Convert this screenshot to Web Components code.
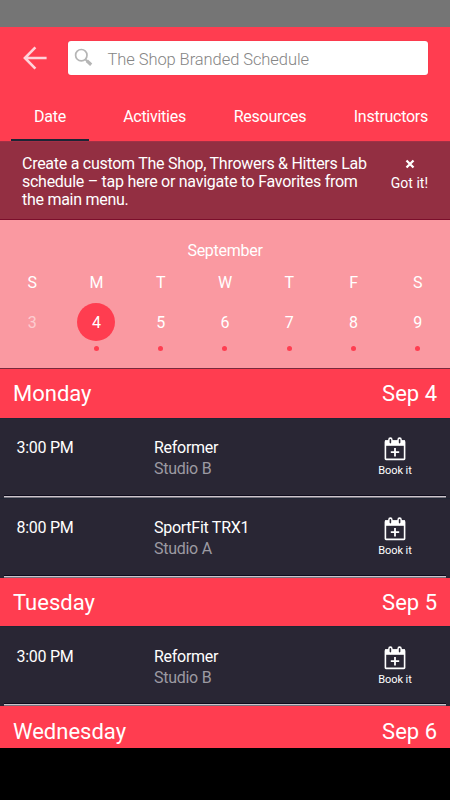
<!DOCTYPE html>
<html lang="en">
<head>
<meta charset="utf-8">
<meta name="viewport" content="width=device-width, initial-scale=1">
<title>Schedule</title>
<style>
    body{
        margin: 0;
        background-color: #000;
        font-family: Roboto, sans-serif;
        font-size: 16px;
        letter-spacing: -.27px;
        color: #fff;
    }
</style>
</head>
<body>
<schedule-app></schedule-app>
<script>
class BaseElement extends HTMLElement{
    constructor(){
        super();
        this.attachShadow({ mode: 'open' });
    }
    connectedCallback(){
        this.shadowRoot.innerHTML = `<style>${this.styles()}</style>${this.template()}`;
    }
}

window.customElements.define('search-bar', class extends BaseElement{
    styles(){
        return `
            :host{
                display: flex;
                align-items: center;
                height: 34px;
                padding: 14px 22px 16px 23px;
            }
            .back{
                width: 24px;
                height: 24px;
                margin-right: 21px;
            }
            .field{
                flex: 1;
                display: flex;
                align-items: center;
                height: 34px;
                box-sizing: border-box;
                padding-left: 6px;
                border-radius: 3px;
                background-color: #fff;
                box-shadow: 0 0 1px rgba(190, 20, 50, .5);
                color: #858585;
                font-size: 16.5px;
                font-weight: 300;
                letter-spacing: -.07px;
            }
            .field svg{
                width: 19px;
                height: 19px;
                margin: -1px 14.5px 0 0;
            }
            .field span{
                padding-top: 2px;
            }
        `;
    }
    template(){
        return `
            <svg class="back" viewBox="0 0 24 24" fill="none" stroke="#ffd3da" stroke-width="2.6">
                <path d="M12.4 1.4 1.9 12l10.5 10.6M1.9 12H23.6"/>
            </svg>
            <div class="field">
                <svg viewBox="0 0 19 19" fill="none" stroke="#b5b5b5">
                    <circle cx="7.3" cy="7.2" r="5.7" stroke-width="1.7"/>
                    <path d="m11.5 11.5 2 2" stroke-width="1.8"/>
                    <path d="m12.8 12.8 4.4 4" stroke-width="3.2"/>
                </svg>
                <span><slot></slot></span>
            </div>
        `;
    }
});

window.customElements.define('tab-item', class extends BaseElement{
    styles(){
        return `
            :host{
                display: flex;
                align-items: center;
                justify-content: center;
                height: 50px;
                box-sizing: border-box;
                padding-top: 2px;
                border-bottom: 2px solid transparent;
            }
            :host([active]){
                border-color: #1c2535;
            }
        `;
    }
    template(){
        return `<slot></slot>`;
    }
});

window.customElements.define('notice-bar', class extends BaseElement{
    styles(){
        return `
            :host{
                display: flex;
                justify-content: space-between;
                height: 79px;
                box-sizing: border-box;
                padding: 13px 22px 0;
                background-color: #932f42;
                border-top: 1px solid #a23046;
                border-bottom: 1px solid #7b0e2b;
            }
            p{
                margin: 0;
                width: 350px;
                line-height: 18px;
            }
            .close{
                display: flex;
                flex-direction: column;
                align-items: center;
                font-size: 14px;
                letter-spacing: 0;
                line-height: 18px;
            }
            .close svg{
                width: 10px;
                height: 10px;
                margin: 4px 0 5px 1px;
            }
        `;
    }
    template(){
        return `
            <p><slot></slot></p>
            <div class="close">
                <svg viewBox="0 0 10 10" stroke="#fff" stroke-width="2.3"><path d="m1.5 1.5 7 7m0-7-7 7"/></svg>
                <slot name="action"></slot>
            </div>
        `;
    }
});

window.customElements.define('calendar-day', class extends BaseElement{
    styles(){
        return `
            :host{
                display: flex;
                flex-direction: column;
                align-items: center;
                letter-spacing: 0;
            }
            .name{
                height: 20px;
                line-height: 21px;
            }
            .number{
                width: 38px;
                height: 38px;
                margin-top: 11px;
                border-radius: 50%;
                text-align: center;
                line-height: 39px;
            }
            .dot{
                width: 5px;
                height: 5px;
                margin-top: 5px;
                border-radius: 50%;
                background-color: #ff3d50;
            }
            :host([selected]) .number{
                background-color: #ff3d50;
            }
            :host([past]) .number{
                opacity: .5;
            }
            :host([past]) .dot{
                display: none;
            }
        `;
    }
    template(){
        return `
            <div class="name">${this.getAttribute('name')}</div>
            <div class="number"><slot></slot></div>
            <div class="dot"></div>
        `;
    }
});

window.customElements.define('week-calendar', class extends BaseElement{
    styles(){
        return `
            :host{
                display: block;
                height: 149px;
                box-sizing: border-box;
                padding-top: 20px;
                background-color: #fa99a1;
                border-bottom: 1px solid #79293c;
            }
            .month{
                height: 32px;
                line-height: 21px;
                text-align: center;
            }
            .week{
                display: grid;
                grid-template-columns: repeat(7, 1fr);
            }
        `;
    }
    template(){
        return `
            <div class="month">${this.getAttribute('month')}</div>
            <div class="week"><slot></slot></div>
        `;
    }
});

window.customElements.define('day-header', class extends BaseElement{
    styles(){
        return `
            :host{
                display: flex;
                align-items: center;
                justify-content: space-between;
                flex: none;
                height: 48.6px;
                box-sizing: border-box;
                padding: 1.2px 13px 0;
                background-color: #ff3d50;
                font-size: 22px;
                letter-spacing: 0;
            }
        `;
    }
    template(){
        return `<slot></slot><slot name="date"></slot>`;
    }
});

window.customElements.define('class-row', class extends BaseElement{
    styles(){
        return `
            :host{
                display: flex;
                flex-direction: column;
                flex: none;
                height: 80px;
                background-color: #292634;
            }
            .content{
                flex: 1;
                display: grid;
                grid-template-columns: 137.5px 1fr 60px;
                box-sizing: border-box;
                padding: 18.4px 16.5px 0;
                border-top: 1px solid #1f2534;
                line-height: 21px;
            }
            .room{
                color: #9c9aa2;
            }
            .book{
                display: flex;
                flex-direction: column;
                align-items: center;
                width: 43px;
                font-size: 11px;
                letter-spacing: -.1px;
                line-height: 14px;
            }
            .book svg{
                width: 22px;
                height: 24px;
                margin: 0 0 3px;
            }
            .line{
                height: 2px;
                margin: 0 4px;
                box-sizing: border-box;
                background-color: #cbc5cc;
                border-bottom: 1px solid #77737e;
                box-shadow: 0 -1px #0e0b1c;
            }
        `;
    }
    template(){
        return `
            <div class="content">
                <div>${this.getAttribute('time')}</div>
                <div>
                    <div><slot></slot></div>
                    <div class="room">${this.getAttribute('room')}</div>
                </div>
                <div class="book">
                    <svg viewBox="0 0 22 24" fill="none" stroke="#fff">
                        <path d="M1 3.2h20v5.6H1z" fill="#fff" stroke="none"/>
                        <rect x="1.4" y="4.4" width="19.2" height="18" rx=".6" stroke-width="1.6"/>
                        <path d="M6.4 6V2.4M15.6 6V2.4" stroke-width="4.4" stroke-linecap="round"/>
                        <path d="M6.4 5.6V2.8M15.6 5.6V2.8" stroke="#292634" stroke-width="1.6" stroke-linecap="round"/>
                        <path d="M11 11v8.4M6.8 15.2h8.4" stroke-width="1.8"/>
                    </svg>
                    <span>Book it</span>
                </div>
            </div>
            <div class="line"></div>
        `;
    }
});

window.customElements.define('schedule-app', class extends BaseElement{
    styles(){
        return `
            :host{
                display: flex;
                flex-direction: column;
                height: 800px;
                overflow: hidden;
            }
            .status{
                height: 27px;
                background-color: #757575;
            }
            header{
                height: 114px;
                background-color: #ff3d50;
            }
            nav{
                display: grid;
                grid-template-columns: 78px 131px 100px 1fr;
                padding: 0 22px 0 11px;
            }
            nav tab-item:last-child{
                justify-content: flex-end;
            }
            main{
                display: flex;
                flex-direction: column;
                height: 379px;
                overflow: hidden;
            }
        `;
    }
    template(){
        return `
            <div class="status"></div>
            <header>
                <search-bar>The Shop Branded Schedule</search-bar>
                <nav>
                    <tab-item active>Date</tab-item>
                    <tab-item>Activities</tab-item>
                    <tab-item>Resources</tab-item>
                    <tab-item>Instructors</tab-item>
                </nav>
            </header>
            <notice-bar>
                Create a custom The Shop, Throwers &amp; Hitters Lab schedule – tap here or navigate to Favorites from the main menu.
                <span slot="action">Got it!</span>
            </notice-bar>
            <week-calendar month="September">
                <calendar-day name="S" past>3</calendar-day>
                <calendar-day name="M" selected>4</calendar-day>
                <calendar-day name="T">5</calendar-day>
                <calendar-day name="W">6</calendar-day>
                <calendar-day name="T">7</calendar-day>
                <calendar-day name="F">8</calendar-day>
                <calendar-day name="S">9</calendar-day>
            </week-calendar>
            <main>
                <day-header>Monday<span slot="date">Sep 4</span></day-header>
                <class-row time="3:00 PM" room="Studio B">Reformer</class-row>
                <class-row time="8:00 PM" room="Studio A">SportFit TRX1</class-row>
                <day-header>Tuesday<span slot="date">Sep 5</span></day-header>
                <class-row time="3:00 PM" room="Studio B">Reformer</class-row>
                <day-header>Wednesday<span slot="date">Sep 6</span></day-header>
            </main>
        `;
    }
});
</script>
</body>
</html>
